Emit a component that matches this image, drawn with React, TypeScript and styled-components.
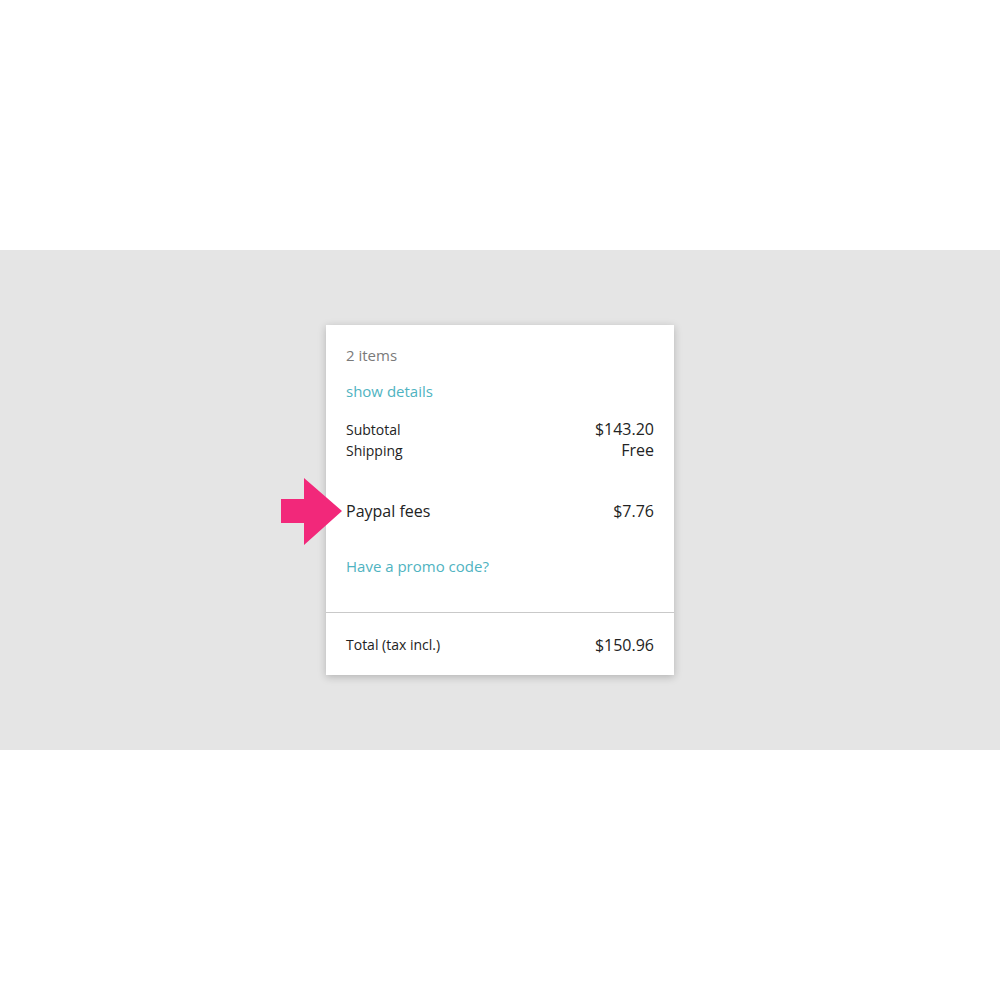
import React from 'react';
import styled, { createGlobalStyle } from 'styled-components';

const GlobalStyle = createGlobalStyle`
  html, body {
    margin: 0;
    padding: 0;
    background: #ffffff;
  }
  body {
    font-family: "Open Sans", "Noto Sans", "Liberation Sans", sans-serif;
    color: #232323;
  }
`;

const Page = styled.div`
  display: flex;
  flex-direction: column;
  width: 1000px;
  height: 1000px;
`;

const WhiteBand = styled.div`
  height: 250px;
  background: #ffffff;
`;

const GreyBand = styled.div`
  height: 500px;
  background: #e5e5e5;
  display: flex;
  justify-content: center;
  align-items: center;
`;

const Card = styled.div`
  position: relative;
  width: 348px;
  background: #ffffff;
  box-shadow: 0 2px 8px rgba(0, 0, 0, 0.22);
`;

const Body = styled.div`
  padding: 20px 20px 36px;
  border-bottom: 1px solid #c9c9c9;
`;

const Items = styled.div`
  font-size: 15px;
  line-height: 20px;
  color: #7a7a7a;
`;

const Link = styled.a<{ $top: number }>`
  display: block;
  margin-top: ${p => p.$top}px;
  font-size: 15px;
  line-height: 20px;
  color: #4fb3c1;
  text-decoration: none;
  cursor: pointer;
`;

const Row = styled.div<{ $top?: number; $big?: boolean }>`
  display: flex;
  justify-content: space-between;
  align-items: center;
  margin-top: ${p => p.$top ?? 0}px;
  font-size: ${p => (p.$big ? 16 : 14)}px;
  line-height: ${p => (p.$big ? 22 : 21)}px;
  color: #232323;
`;

const Value = styled.span<{ $size?: number }>`
  font-size: ${p => p.$size ?? 15}px;
`;

const Footer = styled.div`
  padding: 21px 20px 19px;
`;

const Arrow = styled.svg`
  position: absolute;
  left: -46px;
  top: 153px;
`;

function PinkArrow() {
  return (
    <Arrow width="64" height="68" viewBox="0 0 64 68">
      <path d="M1 21 H24 V0 L62 33 L24 67 V45 H1 Z" fill="#f2287a" />
    </Arrow>
  );
}

export default function App() {
  return (
    <Page>
      <GlobalStyle />
      <WhiteBand />
      <GreyBand>
        <Card>
          <PinkArrow />
          <Body>
            <Items>2 items</Items>
            <Link $top={16}>show details</Link>
            <Row $top={18}>
              <span>Subtotal</span>
              <Value $size={16}>$143.20</Value>
            </Row>
            <Row>
              <span>Shipping</span>
              <Value $size={16}>Free</Value>
            </Row>
            <Row $top={39} $big>
              <span>Paypal fees</span>
              <Value $size={16}>$7.76</Value>
            </Row>
            <Link $top={34}>Have a promo code?</Link>
          </Body>
          <Footer>
            <Row $big>
              <Value $size={14}>Total (tax incl.)</Value>
              <Value $size={16}>$150.96</Value>
            </Row>
          </Footer>
        </Card>
      </GreyBand>
      <WhiteBand />
    </Page>
  );
}
